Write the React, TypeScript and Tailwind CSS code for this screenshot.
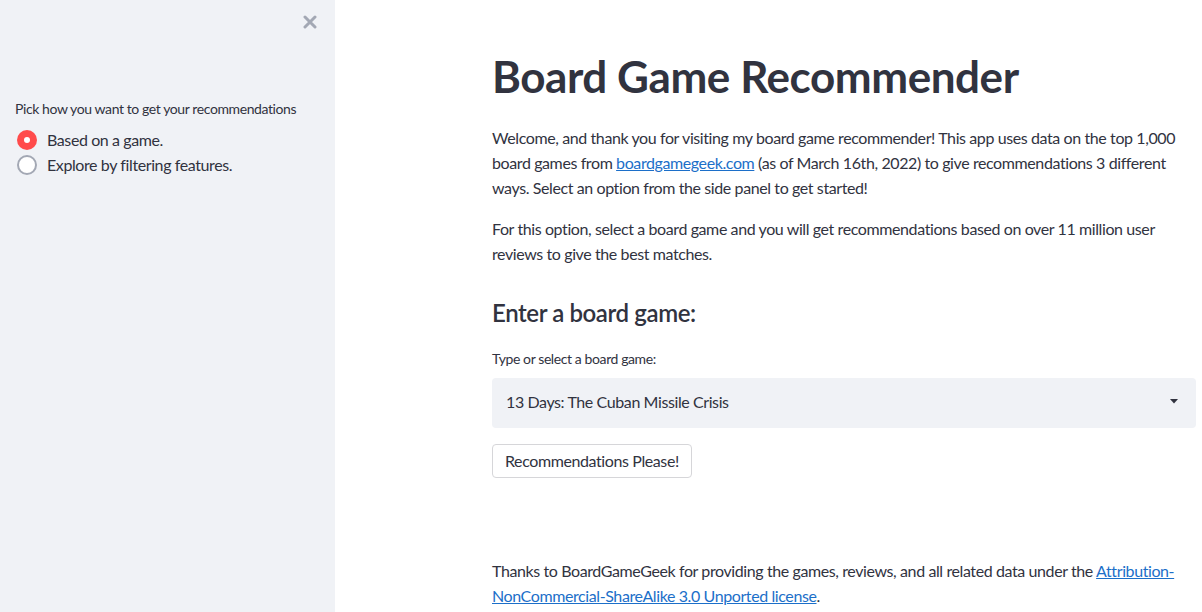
const font = { fontFamily: '"Lato", "Noto Sans", sans-serif' }

function Radio({ checked, label }: { checked: boolean; label: string }) {
  return (
    <label className="flex h-[25px] items-center gap-[10px]">
      {checked ? (
        <span className="flex h-5 w-5 items-center justify-center rounded-full bg-[#ff4b4b]">
          <span className="h-[6px] w-[6px] rounded-full bg-white" />
        </span>
      ) : (
        <span className="h-5 w-5 rounded-full border-2 border-[#a3a8b4] bg-white" />
      )}
      <span className="text-base text-[#31333f]">{label}</span>
    </label>
  )
}

function Sidebar() {
  return (
    <aside className="relative h-full w-[335px] shrink-0 bg-[#f0f2f6] px-[15px] pt-[99px] tracking-[-0.025em]">
      <button className="absolute right-[18px] top-[15px] text-[#a3a8b4]">
        <svg width="14" height="14" viewBox="0 0 14 14" fill="none" stroke="currentColor" strokeWidth="3" strokeLinecap="round">
          <path d="M2 2l10 10M12 2L2 12" />
        </svg>
      </button>
      <div className="mb-[8px] text-sm text-[#31333f]">Pick how you want to get your recommendations</div>
      <div className="flex flex-col pl-[2px]">
        <Radio checked label="Based on a game." />
        <Radio checked={false} label="Explore by filtering features." />
      </div>
    </aside>
  )
}

function MainContent() {
  return (
    <main className="h-full flex-1 overflow-hidden bg-white pl-[157px] pt-[50px]">
      <div className="w-[704px] text-[#31333f] tracking-[-0.025em]">
        <h1 className="text-[44px] font-bold leading-[53px] tracking-[-0.01em]">Board Game Recommender</h1>
        <p className="mt-[22px] text-base leading-[25px]">
          Welcome, and thank you for visiting my board game recommender! This app uses data on the top 1,000 board
          games from{' '}
          <a href="#" className="text-[#1c6fc9] underline">
            boardgamegeek.com
          </a>{' '}
          (as of March 16th, 2022) to give recommendations 3 different ways. Select an option from the side panel to
          get started!
        </p>
        <p className="mt-4 text-base leading-[25px]">
          For this option, select a board game and you will get recommendations based on over 11 million user reviews
          to give the best matches.
        </p>
        <h3 className="mt-[32px] text-2xl font-semibold leading-[30px]">Enter a board game:</h3>
        <div className="mt-[22px] text-sm leading-[18px]">Type or select a board game:</div>
        <div className="mt-[10px] flex h-[50px] items-center justify-between rounded-[4px] bg-[#f0f2f6] pb-[3px] pl-[14px] pr-[18px]">
          <span className="text-base">13 Days: The Cuban Missile Crisis</span>
          <svg width="8" height="5" viewBox="0 0 8 5" fill="#31333f">
            <path d="M0 0h8L4 4.5z" />
          </svg>
        </div>
        <button className="mt-[16px] h-[34px] rounded-[4px] border border-[#d6d6d9] bg-white px-[12px] text-base">
          Recommendations Please!
        </button>
        <p className="mt-[80px] text-base leading-[25px]">
          Thanks to BoardGameGeek for providing the games, reviews, and all related data under the{' '}
          <a href="#" className="text-[#1c6fc9] underline">
            Attribution-NonCommercial-ShareAlike 3.0 Unported license
          </a>
          .
        </p>
      </div>
    </main>
  )
}

export default function App() {
  return (
    <div className="flex h-[612px] w-full overflow-hidden" style={font}>
      <Sidebar />
      <MainContent />
    </div>
  )
}
